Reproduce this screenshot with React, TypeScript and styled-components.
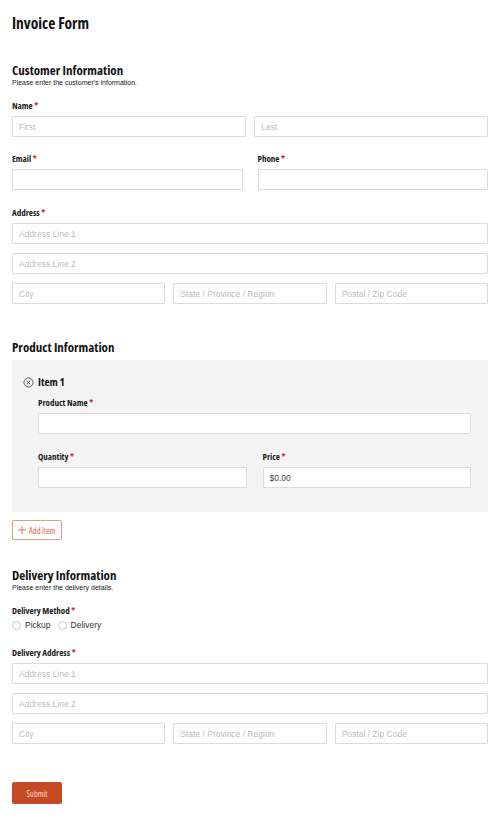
import styled, { createGlobalStyle } from "styled-components";

const GlobalStyle = createGlobalStyle`
  body {
    margin: 0;
    background: #fff;
    font-family: "Liberation Sans", Arial, sans-serif;
  }
`;

const Page = styled.form`
  padding: 13px 12px 12px;
  width: 476px;
`;

const Title = styled.h1`
  margin: 0 0 29px;
  font-family: "Open Sans", sans-serif;
  font-stretch: 75%;
  font-weight: 700;
  font-size: 15.5px;
  line-height: 20px;
  color: #111;
`;

const Section = styled.section<{ $gap?: number }>`
  margin-bottom: ${(p) => p.$gap ?? 30}px;
`;

const SectionTitle = styled.h2`
  margin: 0;
  font-family: "Open Sans", sans-serif;
  font-stretch: 75%;
  font-weight: 700;
  font-size: 13px;
  line-height: 16px;
  color: #111;
`;

const SectionNote = styled.p`
  margin: 0;
  font-size: 7px;
  line-height: 9px;
  color: #222;
`;

const Field = styled.div<{ $top?: number }>`
  margin-top: ${(p) => p.$top ?? 14}px;
  display: flex;
  flex-direction: column;
`;

const Label = styled.label`
  display: block;
  font-family: "Open Sans", sans-serif;
  font-stretch: 75%;
  font-weight: 700;
  font-size: 9px;
  line-height: 12px;
  color: #1a1a1a;
  margin-bottom: 4px;

  span {
    color: #c8322d;
  }
`;

const Row = styled.div<{ $cols: number; $gap: number }>`
  display: grid;
  grid-template-columns: repeat(${(p) => p.$cols}, 1fr);
  column-gap: ${(p) => p.$gap}px;
`;

const Stack = styled.div`
  display: flex;
  flex-direction: column;
  gap: 9px;
`;

const Input = styled.input`
  display: block;
  box-sizing: border-box;
  width: 100%;
  height: 21px;
  margin: 0;
  padding: 0 6px;
  border: 1px solid #dcdcdc;
  border-radius: 1px;
  background: #fff;
  font-family: "Liberation Sans", Arial, sans-serif;
  font-size: 8.5px;
  color: #444;
  outline: none;

  &::placeholder {
    color: #bdbdbd;
  }
`;

const ItemBox = styled.div`
  margin-top: 5px;
  background: #f4f4f4;
  padding: 15px 17px 24px 26px;
`;

const ItemHead = styled.div`
  display: flex;
  align-items: center;
  gap: 4px;
  margin-left: -15px;
  font-family: "Open Sans", sans-serif;
  font-stretch: 75%;
  font-weight: 700;
  font-size: 11px;
  line-height: 14px;
  color: #111;

  svg {
    display: block;
  }
`;

const AddButton = styled.button`
  margin-top: 8px;
  height: 20px;
  padding: 0 6px 0 5px;
  display: inline-flex;
  align-items: center;
  gap: 3px;
  background: #fff;
  border: 1px solid #e19c86;
  border-radius: 2px;
  color: #d86a48;
  font-family: "Open Sans", sans-serif;
  font-stretch: 75%;
  font-size: 8.5px;
  cursor: pointer;
`;

const RadioGroup = styled.div`
  display: flex;
  gap: 7px;
  margin-top: -1px;
`;

const RadioOption = styled.label`
  display: flex;
  align-items: center;
  gap: 4px;
  font-size: 8.5px;
  color: #333;

  i {
    box-sizing: border-box;
    width: 9px;
    height: 9px;
    border: 1px solid #c8c8c8;
    border-radius: 50%;
    background: #fff;
  }
`;

const Submit = styled.button`
  display: block;
  margin-top: 38px;
  width: 50px;
  height: 22px;
  border: none;
  border-radius: 2px;
  background: #c64b25;
  color: #f6ddd3;
  font-family: "Open Sans", sans-serif;
  font-stretch: 75%;
  font-size: 8.5px;
  cursor: pointer;
`;

const Req = () => <span> *</span>;

const AddressBlock = () => (
  <Stack>
    <Input placeholder="Address Line 1" />
    <Input placeholder="Address Line 2" />
    <Row $cols={3} $gap={8}>
      <Input placeholder="City" />
      <Input placeholder="State / Province / Region" />
      <Input placeholder="Postal / Zip Code" />
    </Row>
  </Stack>
);

export default function App() {
  return (
    <>
      <GlobalStyle />
      <Page onSubmit={(e) => e.preventDefault()}>
        <Title>Invoice Form</Title>

        <Section $gap={35}>
          <SectionTitle>Customer Information</SectionTitle>
          <SectionNote>Please enter the customer's information.</SectionNote>

          <Field $top={13}>
            <Label>Name<Req /></Label>
            <Row $cols={2} $gap={8}>
              <Input placeholder="First" />
              <Input placeholder="Last" />
            </Row>
          </Field>

          <Field $top={16}>
            <Row $cols={2} $gap={15}>
              <div>
                <Label as="div">Email<Req /></Label>
                <Input type="email" />
              </div>
              <div>
                <Label as="div">Phone<Req /></Label>
                <Input type="tel" />
              </div>
            </Row>
          </Field>

          <Field $top={17}>
            <Label>Address<Req /></Label>
            <AddressBlock />
          </Field>
        </Section>

        <Section $gap={27}>
          <SectionTitle>Product Information</SectionTitle>
          <ItemBox>
            <ItemHead>
              <svg width="11" height="11" viewBox="0 0 12 12" fill="none" stroke="#444" strokeWidth="0.9">
                <circle cx="6" cy="6" r="5" />
                <path d="M4 4l4 4M8 4l-4 4" />
              </svg>
              Item 1
            </ItemHead>
            <Field $top={8}>
              <Label>Product Name<Req /></Label>
              <Input />
            </Field>
            <Field $top={17}>
              <Row $cols={2} $gap={16}>
                <div>
                  <Label as="div">Quantity<Req /></Label>
                  <Input type="number" />
                </div>
                <div>
                  <Label as="div">Price<Req /></Label>
                  <Input defaultValue="$0.00" />
                </div>
              </Row>
            </Field>
          </ItemBox>
          <AddButton type="button">
            <svg width="8" height="8" viewBox="0 0 8 8" stroke="#d86a48" strokeWidth="0.9">
              <path d="M4 0v8M0 4h8" />
            </svg>
            Add Item
          </AddButton>
        </Section>

        <Section $gap={0}>
          <SectionTitle>Delivery Information</SectionTitle>
          <SectionNote>Please enter the delivery details.</SectionNote>

          <Field $top={13}>
            <Label>Delivery Method<Req /></Label>
            <RadioGroup>
              <RadioOption><i />Pickup</RadioOption>
              <RadioOption><i />Delivery</RadioOption>
            </RadioGroup>
          </Field>

          <Field $top={17}>
            <Label>Delivery Address<Req /></Label>
            <AddressBlock />
          </Field>
        </Section>

        <Submit type="submit">Submit</Submit>
      </Page>
    </>
  );
}
